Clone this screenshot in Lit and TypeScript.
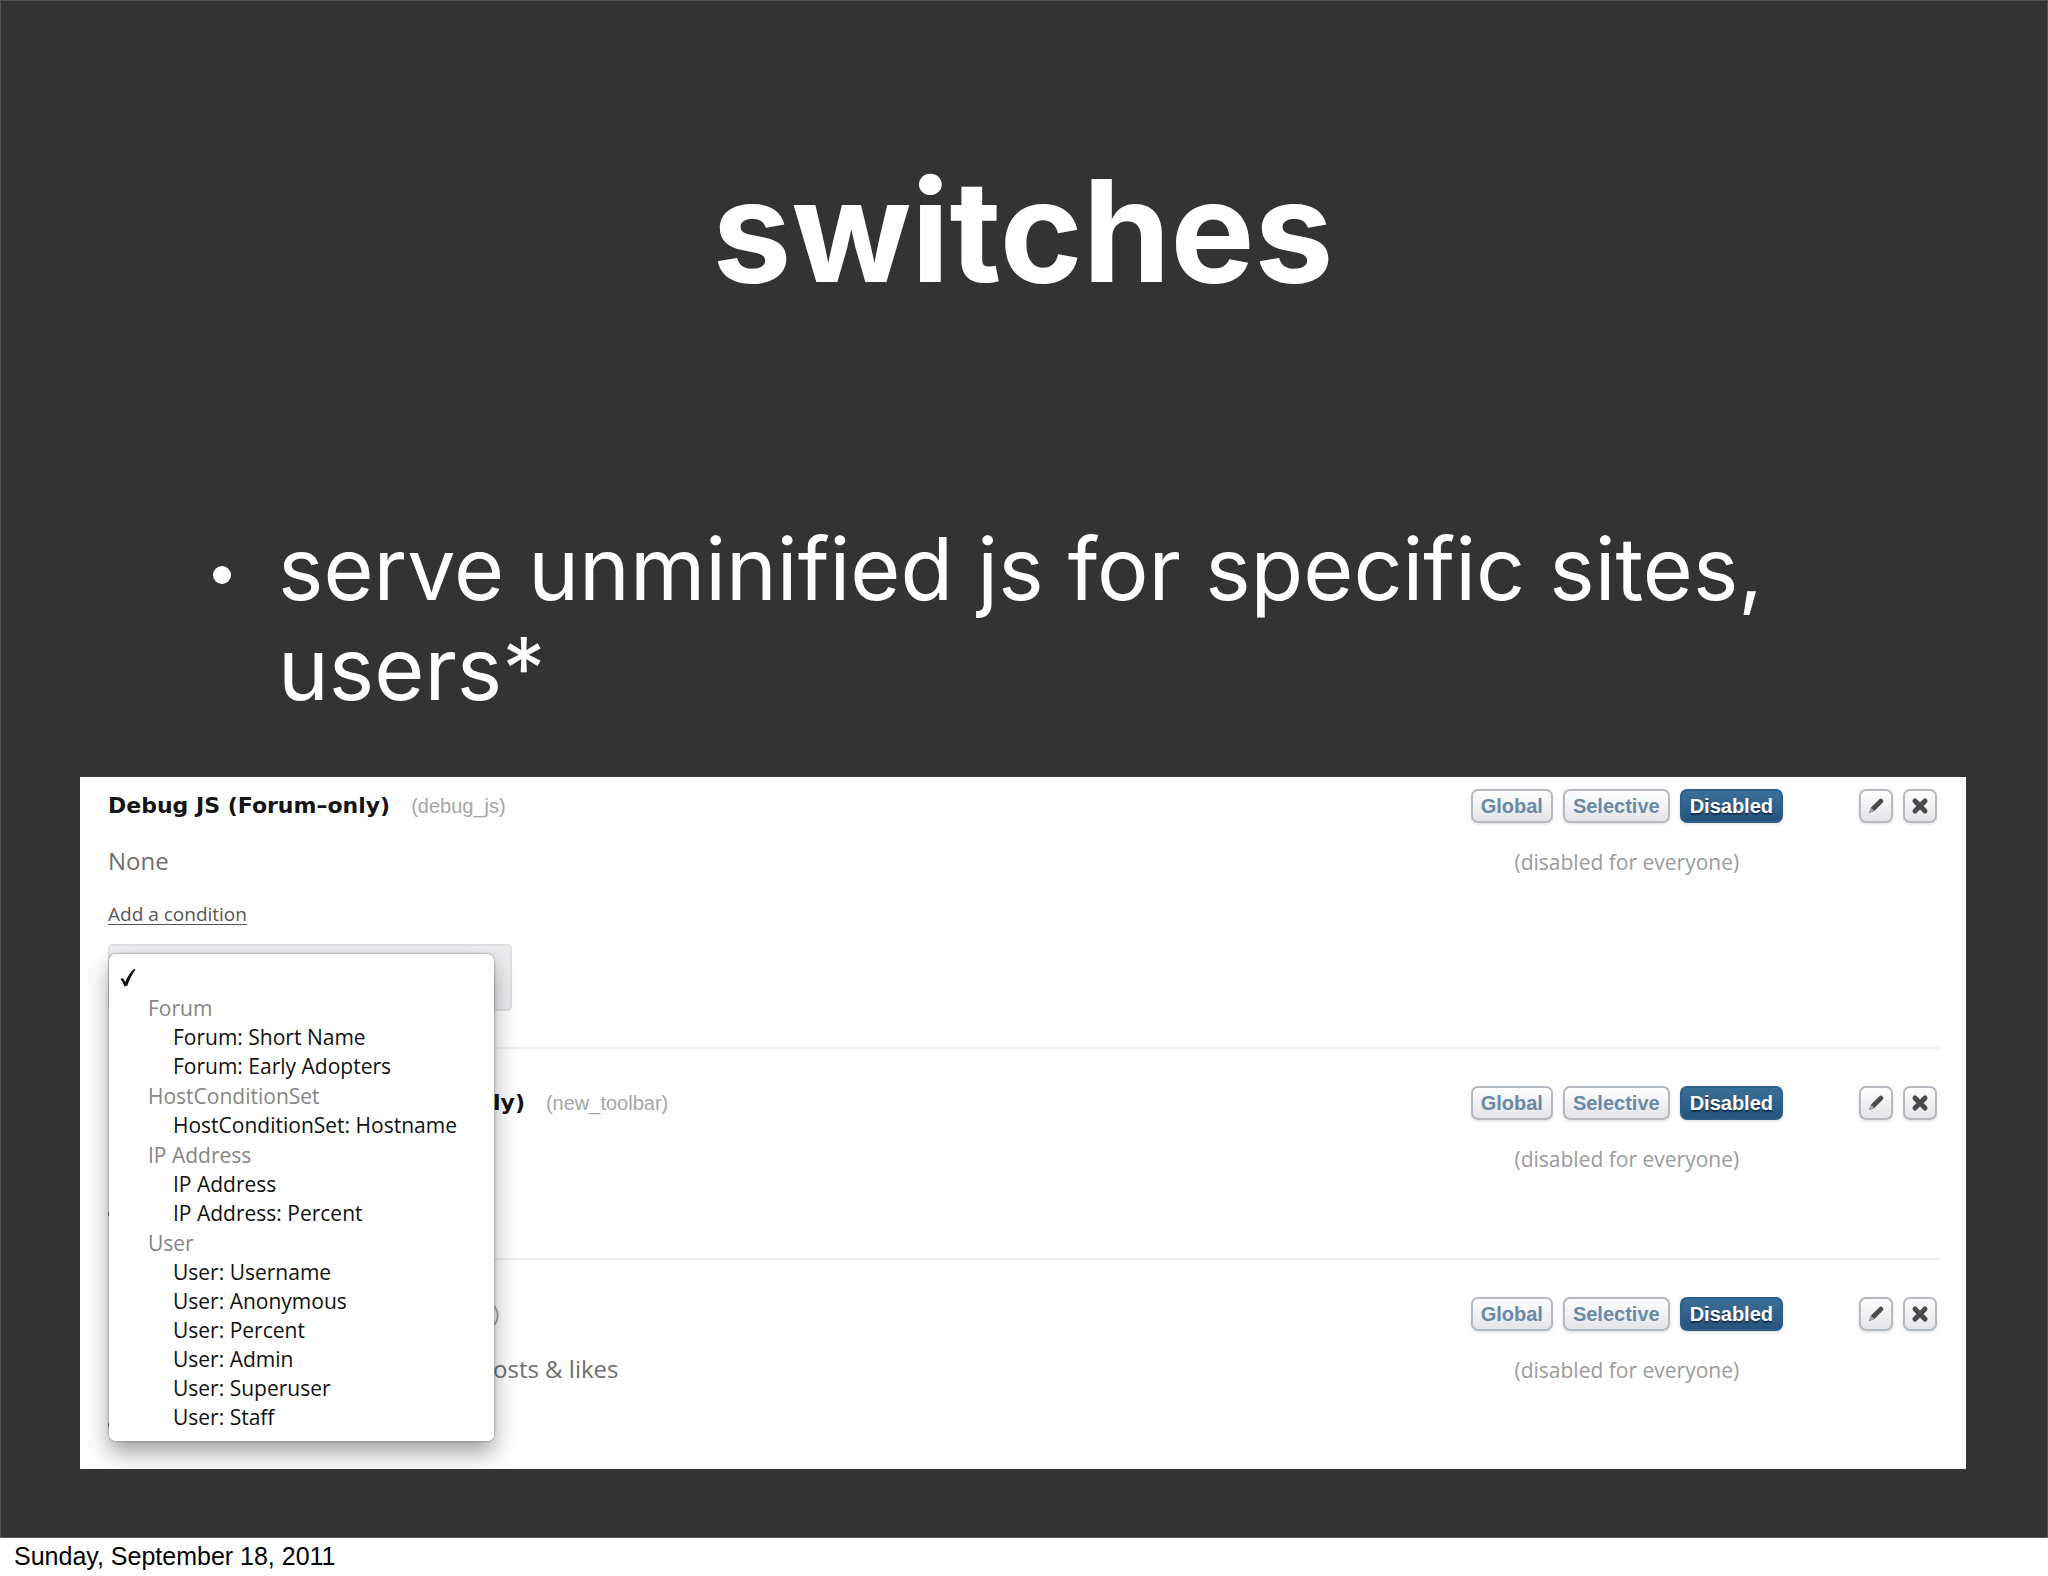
import { LitElement, html, css, svg, nothing } from "lit";
import { customElement, property } from "lit/decorators.js";

interface ConditionGroup {
  label: string;
  options: string[];
}

interface SwitchRow {
  id: string;
  title: string;
  slug: string;
  note: string;
  covered: boolean;
}

const GROUPS: ConditionGroup[] = [
  { label: "Forum", options: ["Forum: Short Name", "Forum: Early Adopters"] },
  { label: "HostConditionSet", options: ["HostConditionSet: Hostname"] },
  { label: "IP Address", options: ["IP Address", "IP Address: Percent"] },
  {
    label: "User",
    options: [
      "User: Username",
      "User: Anonymous",
      "User: Percent",
      "User: Admin",
      "User: Superuser",
      "User: Staff",
    ],
  },
];

const ROWS: SwitchRow[] = [
  { id: "debug", title: "Debug JS (Forum–only)", slug: "(debug_js)", note: "None", covered: false },
  { id: "toolbar", title: "ly)", slug: "(new_toolbar)", note: "", covered: true },
  { id: "likes", title: "", slug: ")", note: "osts & likes", covered: true },
];

const MODES = ["Global", "Selective", "Disabled"];

const pencil = svg`
  <path d="M4 18 L6 12.6 L14.4 4.2 Q16 2.8 17.6 4.4 Q19.2 6 17.8 7.6 L9.4 16 Z" fill="#4a4a4a"/>
  <path d="M4 18 L6 12.6 L9.4 16 Z" fill="#a4a4a4"/>`;

const cross = svg`
  <path d="M6 6 L16 16 M16 6 L6 16" stroke="#4a4a4a" stroke-width="5" stroke-linecap="round"/>`;

@customElement("condition-menu")
class ConditionMenu extends LitElement {
  static styles = css`
    :host {
      display: block;
      box-sizing: border-box;
      padding: 7px 0 9px;
      border-radius: 7px;
      background: rgba(255, 255, 255, 0.98);
      box-shadow: 0 12px 22px rgba(0, 0, 0, 0.36), 0 0 3px rgba(0, 0, 0, 0.4);
      font-family: "Open Sans", "Noto Sans", sans-serif;
      font-size: 21px;
      line-height: 29px;
    }
    .blank {
      display: flex;
      align-items: center;
      width: 100%;
      height: 33px;
      padding: 0 0 0 10px;
      border: 0;
      background: none;
    }
    .groups {
      display: flex;
      flex-direction: column;
      gap: 1px;
    }
    .label {
      padding-left: 39px;
      color: #858585;
    }
    .option {
      display: block;
      width: 100%;
      padding: 0 0 0 64px;
      border: 0;
      background: none;
      color: #111;
      font: inherit;
      text-align: left;
    }
  `;

  render() {
    return html`
      <button class="blank" aria-label="No condition">
        <svg width="18" height="20" viewBox="0 0 18 20" aria-hidden="true">
          <path d="M1.5 11 Q3.6 9.6 4.6 11 L6.2 14 Q10 5 15 1 L16.6 1.4 Q11.6 8 8.4 17.6 L5.6 18.6 Q4 14 1.5 11 Z" fill="#111" />
        </svg>
      </button>
      <div class="groups">
        ${GROUPS.map(
          (g) => html`<div role="group" aria-label=${g.label}>
            <div class="label">${g.label}</div>
            ${g.options.map((o) => html`<button class="option">${o}</button>`)}
          </div>`
        )}
      </div>
    `;
  }
}

@customElement("switch-row")
class SwitchRowElement extends LitElement {
  @property({ attribute: false }) row!: SwitchRow;

  static styles = css`
    :host {
      display: flex;
      justify-content: space-between;
      align-items: flex-start;
      font-family: "Open Sans", "Noto Sans", sans-serif;
    }
    .info {
      display: flex;
      flex-direction: column;
      align-items: flex-start;
    }
    .heading {
      display: flex;
      align-items: center;
      gap: 21px;
      height: 34px;
      margin-bottom: 24px;
    }
    .title {
      margin: 0;
      color: #151515;
      font-family: "DejaVu Sans", sans-serif;
      font-size: 22px;
      font-weight: 700;
      line-height: 34px;
    }
    .slug {
      color: #a6a6a6;
      font-family: "Liberation Sans", Arial, sans-serif;
      font-size: 20px;
      line-height: 34px;
    }
    .note {
      height: 28px;
      margin: 0 0 25px;
      color: #707070;
      font-size: 24px;
      line-height: 28px;
    }
    .covered {
      padding-left: 385px;
    }
    .add {
      color: #555;
      font-size: 19px;
      line-height: 28px;
      text-underline-offset: 3px;
    }
    .stub {
      width: 2px;
      height: 4px;
      margin: 15px 0 10px;
      background: #777;
    }
    .field {
      position: relative;
      margin-top: 16px;
    }
    .picker {
      display: block;
      width: 404px;
      height: 67px;
      border: 2px solid #dfdfe1;
      border-radius: 5px;
      background: #ececee;
      appearance: none;
    }
    .menu {
      position: absolute;
      top: 10px;
      left: 1px;
      z-index: 2;
      width: 385px;
    }
    .controls {
      display: flex;
      align-items: flex-start;
      gap: 76px;
    }
    .state {
      display: flex;
      flex-direction: column;
      align-items: center;
      gap: 25px;
      color: #9c9c9c;
      font-size: 21px;
      line-height: 28px;
    }
    .buttons {
      display: flex;
      gap: 10px;
    }
    .button {
      display: flex;
      align-items: center;
      justify-content: center;
      box-sizing: border-box;
      height: 34px;
      padding: 0 8px;
      border: 2px solid #b4bbc0;
      border-radius: 7px;
      background: linear-gradient(#fff, #e2e4e7);
      box-shadow: 0 1px 3px rgba(0, 0, 0, 0.15);
      color: #6a8aa8;
      font: 700 20px "Liberation Sans", Arial, sans-serif;
    }
    .active {
      border-color: #2d5f88;
      background: linear-gradient(#3b6f98, #28537a);
      color: #fff;
      text-shadow: 0 2px 1px #12314e;
    }
    .icon {
      width: 34px;
      padding: 0;
    }
  `;

  render() {
    const r = this.row;
    const cover = r.covered ? "covered" : "";
    return html`
      <div class="info">
        <div class="heading ${cover}">
          ${r.title ? html`<h2 class="title">${r.title}</h2>` : nothing}
          <span class="slug">${r.slug}</span>
        </div>
        <p class="note ${cover}">${r.note}</p>
        ${r.covered
          ? html`<div class="stub"></div>`
          : html`<a class="add" href="#${r.id}">Add a condition</a>
              <div class="field">
                <select class="picker" aria-label="Condition"></select>
                <condition-menu class="menu"></condition-menu>
              </div>`}
      </div>
      <div class="controls">
        <div class="state">
          <div class="buttons">
            ${MODES.map(
              (m) => html`<button class="button ${m === "Disabled" ? "active" : ""}">${m}</button>`
            )}
          </div>
          <span>(disabled for everyone)</span>
        </div>
        <div class="buttons">
          <button class="button icon" aria-label="Edit">
            <svg width="22" height="22" viewBox="0 0 22 22" fill="none" aria-hidden="true">${pencil}</svg>
          </button>
          <button class="button icon" aria-label="Delete">
            <svg width="22" height="22" viewBox="0 0 22 22" fill="none" aria-hidden="true">${cross}</svg>
          </button>
        </div>
      </div>
    `;
  }
}

@customElement("app-root")
class AppRoot extends LitElement {
  static styles = css`
    :host {
      display: flex;
      flex-direction: column;
      min-height: 100vh;
      background: #fff;
    }
    .slide {
      display: flex;
      flex-direction: column;
      flex: 1;
      box-sizing: border-box;
      padding: 150px 81px 68px 79px;
      border: 1px solid #555;
      background: #333;
      color: #fff;
      font-family: Inter, sans-serif;
    }
    .headline {
      margin: 0 0 208px;
      font-size: 141px;
      font-weight: 700;
      line-height: 160px;
      text-align: center;
    }
    .points {
      margin: 0 0 58px;
      padding: 0 100px 0 198px;
      list-style: none;
      font-size: 86px;
      font-weight: 400;
      line-height: 100px;
    }
    .point {
      position: relative;
    }
    .point::before {
      content: "";
      position: absolute;
      top: 47px;
      left: -65px;
      width: 18px;
      height: 18px;
      border-radius: 50%;
      background: #fff;
    }
    .panel {
      overflow: hidden;
      padding: 12px 26px 0 28px;
      background: #fefefe;
    }
    .row {
      padding: 0 3px 32px 0;
    }
    .row:first-child {
      padding-bottom: 36px;
    }
    .row + .row {
      padding-top: 37px;
      border-top: 2px solid #f0f0f2;
    }
    .footer {
      padding: 0 14px 2px;
      color: #000;
      font-family: "Liberation Sans", Arial, sans-serif;
      font-size: 25px;
      line-height: 36px;
    }
  `;

  render() {
    return html`
      <main class="slide">
        <h1 class="headline">switches</h1>
        <ul class="points">
          <li class="point">serve unminified js for specific sites, users*</li>
        </ul>
        <section class="panel">
          ${ROWS.map((row) => html`<switch-row class="row" .row=${row}></switch-row>`)}
        </section>
      </main>
      <footer class="footer">Sunday, September 18, 2011</footer>
    `;
  }
}
